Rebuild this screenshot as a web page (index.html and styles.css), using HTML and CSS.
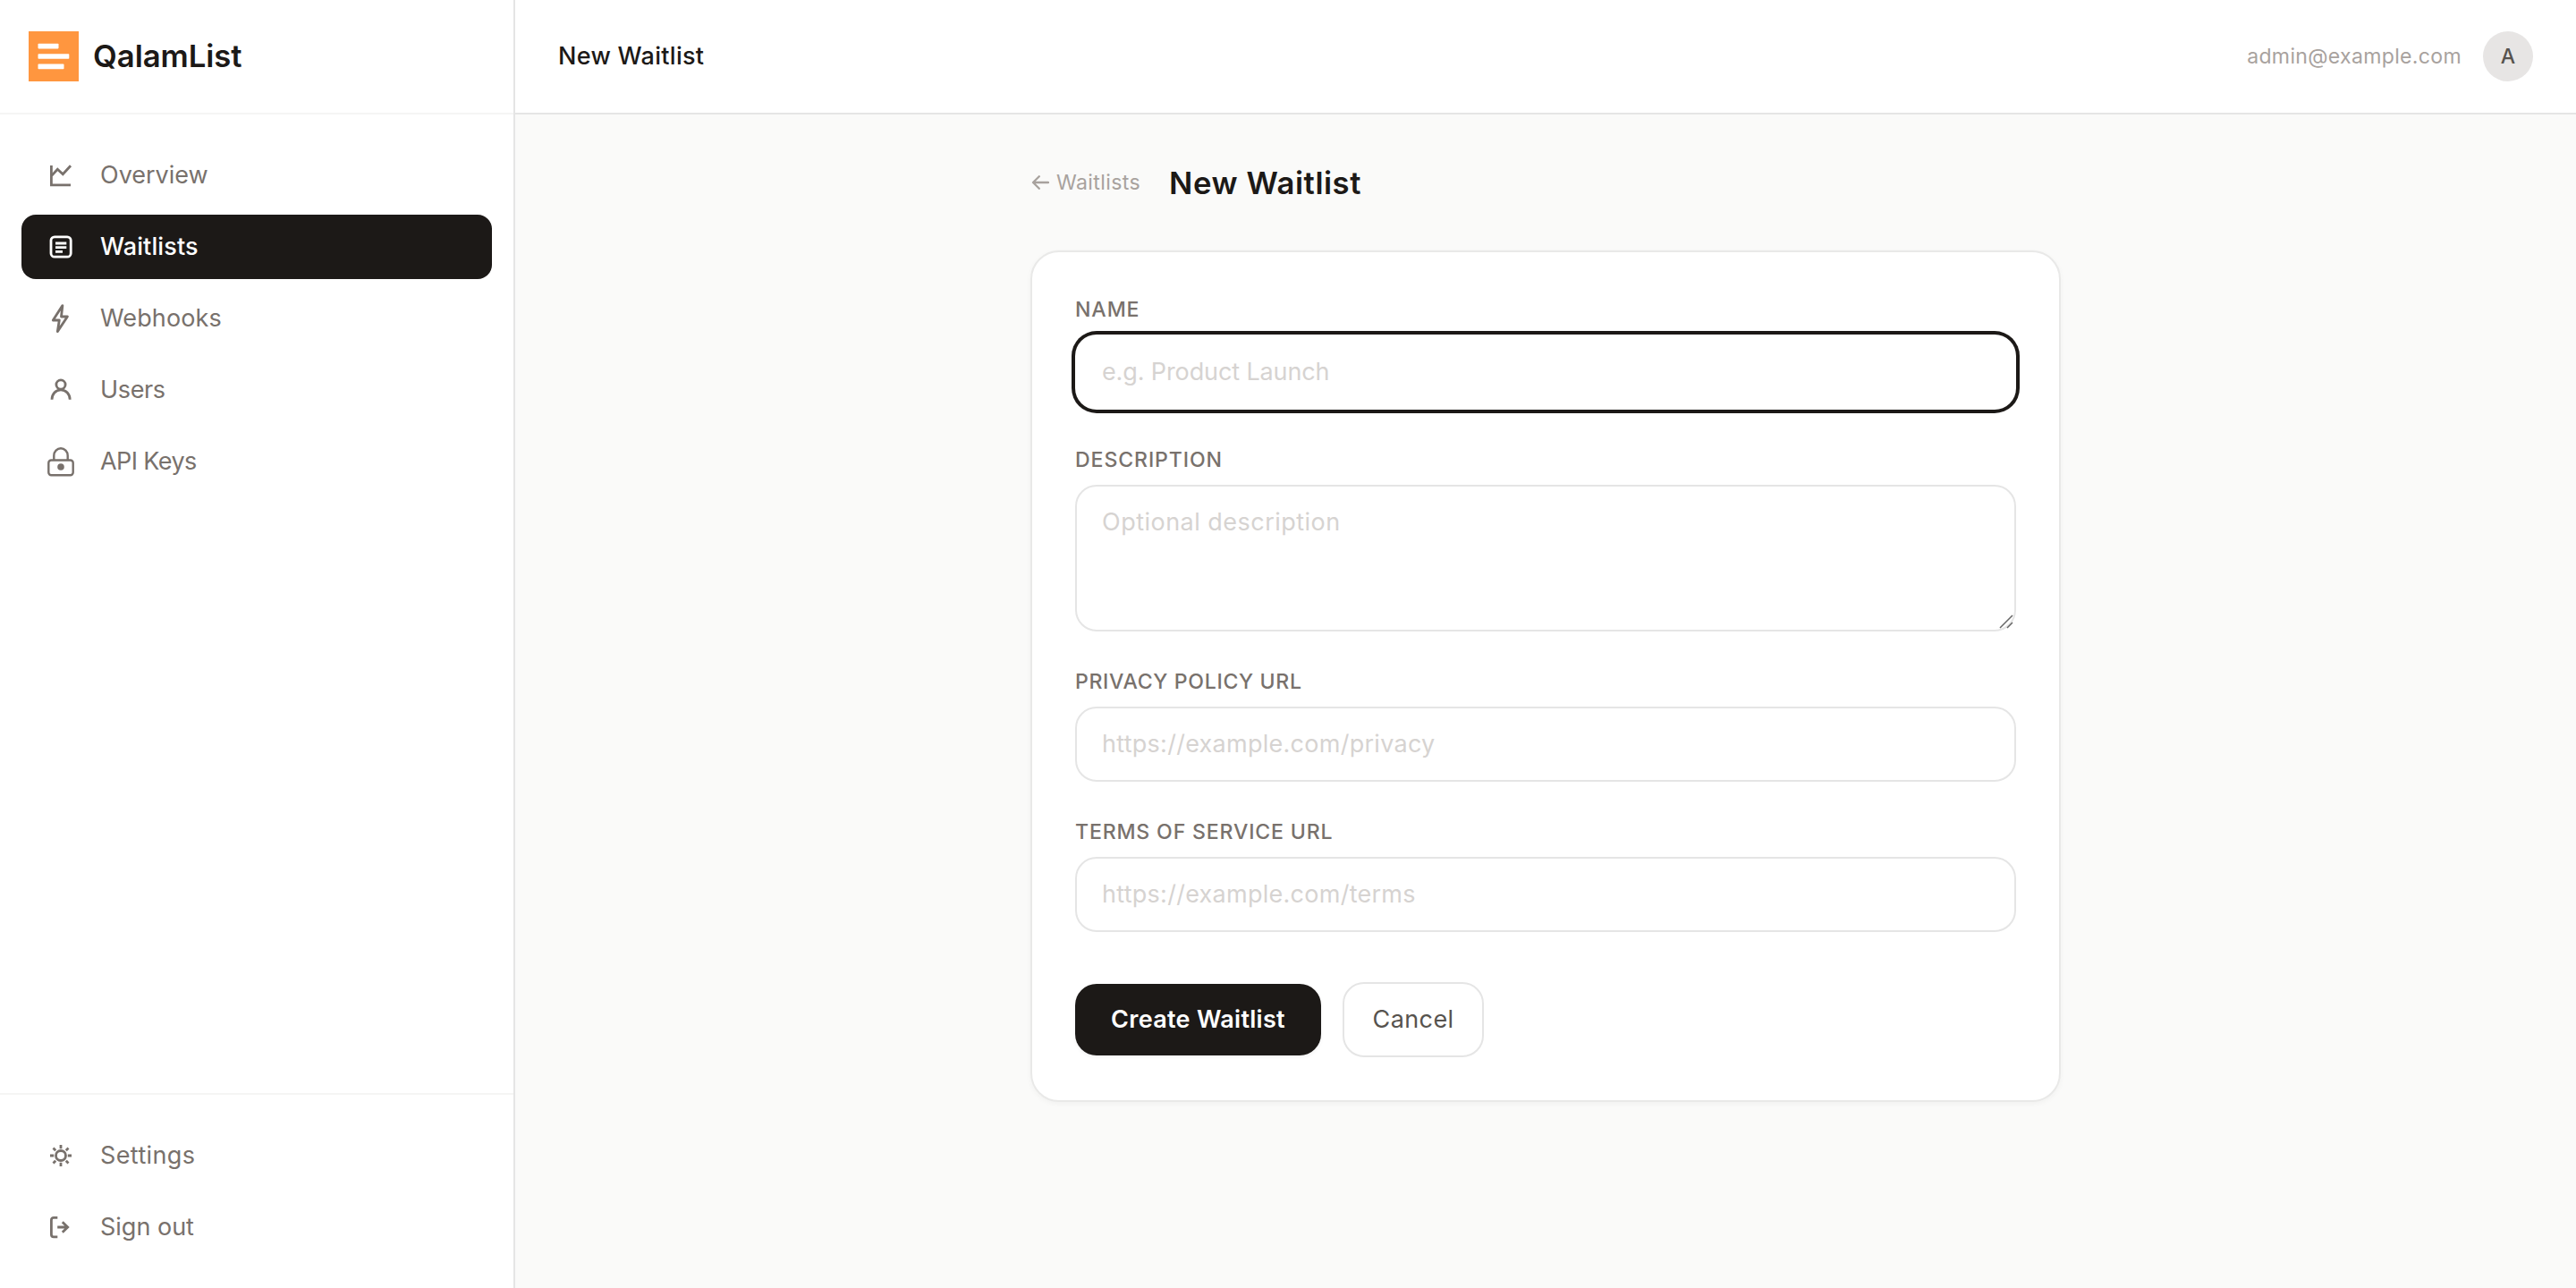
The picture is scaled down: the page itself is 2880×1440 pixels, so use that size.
FILE: index.html
```html
<!DOCTYPE html>
<html lang="en">
<head>
<meta charset="utf-8">
<title>New Waitlist</title>
<link rel="stylesheet" href="styles.css">
</head>
<body>
<div class="app">
  <aside class="sidebar">
    <div class="brand">
      <svg class="brand-mark" viewBox="0 0 56 56">
        <rect width="56" height="56" fill="#ff963f"/>
        <g fill="#fff">
          <rect x="10.5" y="13.8" width="23" height="5.6" rx="0.8"/>
          <rect x="10.5" y="25.2" width="34.8" height="5.6" rx="0.8"/>
          <rect x="10.5" y="36.6" width="29" height="5.6" rx="0.8"/>
        </g>
      </svg>
      <span class="brand-name">QalamList</span>
    </div>
    <nav class="nav nav-main">
      <a class="nav-item">
        <svg class="icon" viewBox="0 0 40 40"><path d="M9.4 9v21.8H31"/><path d="M9.8 20.4l6.5-7.2 6 5.6L31 9.3"/></svg>
        <span class="nav-label">Overview</span>
      </a>
      <a class="nav-item active">
        <svg class="icon" viewBox="0 0 40 40"><rect x="9" y="8.8" width="22.2" height="22.4" rx="4"/><path d="M14 16h12.3M14 20.6h12.3M14 25.3h8"/></svg>
        <span class="nav-label waitlists">Waitlists</span>
      </a>
      <a class="nav-item">
        <svg class="icon joined" viewBox="0 0 40 40"><path d="M21.9 5.6L11.3 22h7l-2 12.6L27.4 18h-6.9z"/></svg>
        <span class="nav-label webhooks">Webhooks</span>
      </a>
      <a class="nav-item">
        <svg class="icon" viewBox="0 0 40 40"><circle cx="20" cy="14" r="5.1"/><path d="M10 30.8c0-6 4.2-11 10-11s10.2 5 10.2 11"/></svg>
        <span class="nav-label users">Users</span>
      </a>
      <a class="nav-item">
        <svg class="icon thin" viewBox="0 0 40 40"><rect x="6.3" y="18.5" width="27.4" height="16.8" rx="3"/><path d="M12.3 18.5v-5.2a7.7 8 0 0 1 15.4 0v5.2"/><circle class="dot" cx="20" cy="26" r="3.8"/></svg>
        <span class="nav-label api-keys">API Keys</span>
      </a>
    </nav>
    <nav class="nav nav-foot">
      <a class="nav-item">
        <svg class="icon" viewBox="0 0 40 40"><circle cx="20" cy="20" r="5.5"/><path d="M20 8v4.2M20 27.8V32M8 20h4.2M27.8 20H32M11.5 11.5l2.7 2.7M25.8 25.8l2.7 2.7M11.5 28.5l2.7-2.7M25.8 14.2l2.7-2.7"/></svg>
        <span class="nav-label settings">Settings</span>
      </a>
      <a class="nav-item">
        <svg class="icon" viewBox="0 0 40 40"><path d="M16.3 9.3h-4.3a2.6 2.6 0 0 0-2.6 2.6v16.4a2.6 2.6 0 0 0 2.6 2.6h4.3"/><path d="M16.2 20H28M21.8 14.3l5.9 5.7-5.9 5.7"/></svg>
        <span class="nav-label">Sign out</span>
      </a>
    </nav>
  </aside>

  <div class="page">
    <header class="topbar">
      <span class="topbar-title">New Waitlist</span>
      <div class="account">
        <span class="email">admin@example.com</span>
        <span class="avatar">A</span>
      </div>
    </header>
    <main class="content">
      <div class="heading">
        <a class="back">
          <svg class="arrow" viewBox="0 0 20 16"><path d="M19 8H2.2M8.8 1.2L2 8l6.8 6.8"/></svg>
          <span>Waitlists</span>
        </a>
        <h1 class="title">New Waitlist</h1>
      </div>
      <form class="card">
        <div class="field">
          <label class="label" for="name">Name</label>
          <input class="input focused" id="name" type="text" placeholder="e.g. Product Launch">
        </div>
        <div class="field">
          <label class="label" for="description">Description</label>
          <div class="textarea-wrap">
            <textarea class="input textarea" id="description" placeholder="Optional description"></textarea>
            <svg class="grip" viewBox="0 0 16 16"><path d="M1 15L15 1M9 15l6-6"/></svg>
          </div>
        </div>
        <div class="field">
          <label class="label policy" for="privacy">Privacy Policy URL</label>
          <input class="input url" id="privacy" type="text" placeholder="https://example.com/privacy">
        </div>
        <div class="field">
          <label class="label terms" for="terms">Terms of Service URL</label>
          <input class="input url" id="terms" type="text" placeholder="https://example.com/terms">
        </div>
        <div class="actions">
          <button class="button primary" type="button">Create Waitlist</button>
          <button class="button secondary" type="button">Cancel</button>
        </div>
      </form>
    </main>
  </div>
</div>
</body>
</html>
```
FILE: styles.css
```css
* { box-sizing: border-box; }

body {
  margin: 0;
  background: #fafaf9;
  color: #1c1917;
  font-family: "Inter", "Liberation Sans", sans-serif;
  font-size: 27px;
}

.app { display: flex; height: 1440px; }

.sidebar {
  display: flex;
  flex-direction: column;
  width: 576px;
  flex-shrink: 0;
  background: #fff;
  border-right: 2px solid #e5e5e5;
}

.brand {
  display: flex;
  align-items: center;
  gap: 16px;
  height: 128px;
  padding: 0 32px;
  border-bottom: 2px solid #f5f5f4;
}
.brand-mark { width: 56px; height: 56px; }
.brand-name {
  padding-bottom: 2px;
  font-size: 34.7px;
  font-weight: 600;
  letter-spacing: -0.05px;
}

.nav { display: flex; flex-direction: column; gap: 8px; padding: 32px 24px; }
.nav-main { flex: 1; }
.nav-foot { border-top: 2px solid #f5f5f4; }
.nav-item {
  display: flex;
  align-items: center;
  gap: 24px;
  height: 72px;
  padding: 0 24px;
  border-radius: 16px;
  color: #78716c;
}
.nav-item.active { background: #1c1917; color: #fff; }
.nav-label { padding-bottom: 2px; white-space: nowrap; }
.active .nav-label { font-weight: 500; }
.waitlists { letter-spacing: 0.11px; }
.webhooks { letter-spacing: 0.12px; }
.users { letter-spacing: -0.35px; }
.api-keys { letter-spacing: -0.6px; }
.settings { letter-spacing: 0.38px; }

.icon {
  width: 40px;
  height: 40px;
  fill: none;
  stroke: currentColor;
  stroke-width: 2.8;
}
.icon.joined { stroke-linejoin: round; }
.icon.thin { stroke-width: 2.4; }
.icon .dot { fill: currentColor; stroke: none; }

.page { display: flex; flex: 1; flex-direction: column; }

.topbar {
  display: flex;
  align-items: center;
  justify-content: space-between;
  height: 128px;
  padding: 0 48px;
  background: #fff;
  border-bottom: 2px solid #e5e5e5;
}
.topbar-title { padding-bottom: 2px; font-weight: 500; letter-spacing: 0.3px; }
.account { display: flex; align-items: center; gap: 24px; }
.email { color: #a8a29e; font-size: 23.1px; letter-spacing: 0.3px; }
.avatar {
  display: grid;
  place-items: center;
  width: 56px;
  height: 56px;
  border-radius: 50%;
  background: #e7e5e4;
  color: #57534e;
  font-size: 23.1px;
  font-weight: 500;
}

.content { width: 1152px; margin: 0 auto; padding-top: 48px; }

.heading {
  display: flex;
  align-items: center;
  gap: 32px;
  height: 56px;
  padding: 0 0 1px 1px;
}
.back {
  display: flex;
  align-items: center;
  gap: 8px;
  color: #a8a29e;
  font-size: 23.1px;
  letter-spacing: 0.39px;
}
.arrow {
  width: 20px;
  height: 16px;
  fill: none;
  stroke: currentColor;
  stroke-width: 2.3;
  stroke-linecap: round;
  stroke-linejoin: round;
}
.title { margin: 0; font-size: 34.7px; font-weight: 600; letter-spacing: 0.54px; }

.card {
  display: flex;
  flex-direction: column;
  gap: 40px;
  margin-top: 48px;
  padding: 48px;
  background: #fff;
  border: 2px solid #e9e9e8;
  border-radius: 32px;
  box-shadow: 0 2px 6px rgba(0, 0, 0, 0.04);
}
.field { display: flex; flex-direction: column; gap: 12px; }
.label {
  color: #78716c;
  font-size: 23.1px;
  font-weight: 500;
  line-height: 32px;
  letter-spacing: 0.9px;
  text-transform: uppercase;
}
.label.policy { letter-spacing: 0.67px; }
.label.terms { letter-spacing: 0.83px; }

.input {
  display: block;
  width: 100%;
  height: 84px;
  padding: 20px 28px 22px;
  background: #fff;
  border: 2px solid #e5e5e5;
  border-radius: 24px;
  outline: none;
  color: #1c1917;
  font: 400 27px/38px "Inter", "Liberation Sans", sans-serif;
}
.input::placeholder { color: #d6d3d1; opacity: 1; }
.input.focused {
  border-color: transparent;
  box-shadow: 0 0 0 4px #1c1917;
  letter-spacing: -0.12px;
}
.input.url { letter-spacing: 0.27px; }
.textarea-wrap { position: relative; }
.input.textarea {
  height: 164px;
  padding-top: 21px;
  resize: none;
  letter-spacing: 0.48px;
}
.grip {
  position: absolute;
  right: 3px;
  bottom: 3px;
  width: 16px;
  height: 16px;
  fill: none;
  stroke: #666;
  stroke-width: 1.5;
}

.actions { display: flex; align-items: center; gap: 24px; padding-top: 16px; }
.button {
  border-radius: 24px;
  padding: 0 0 2px;
  font: 400 27px "Inter", "Liberation Sans", sans-serif;
}
.primary {
  width: 275px;
  height: 80px;
  border: 0;
  background: #1c1917;
  color: #fff;
  font-weight: 600;
  letter-spacing: 0.29px;
  box-shadow: 0 2px 4px rgba(0, 0, 0, 0.05);
}
.secondary {
  width: 158px;
  height: 84px;
  border: 2px solid #e5e5e5;
  background: #fff;
  color: #57534e;
  letter-spacing: 0.4px;
}
```
